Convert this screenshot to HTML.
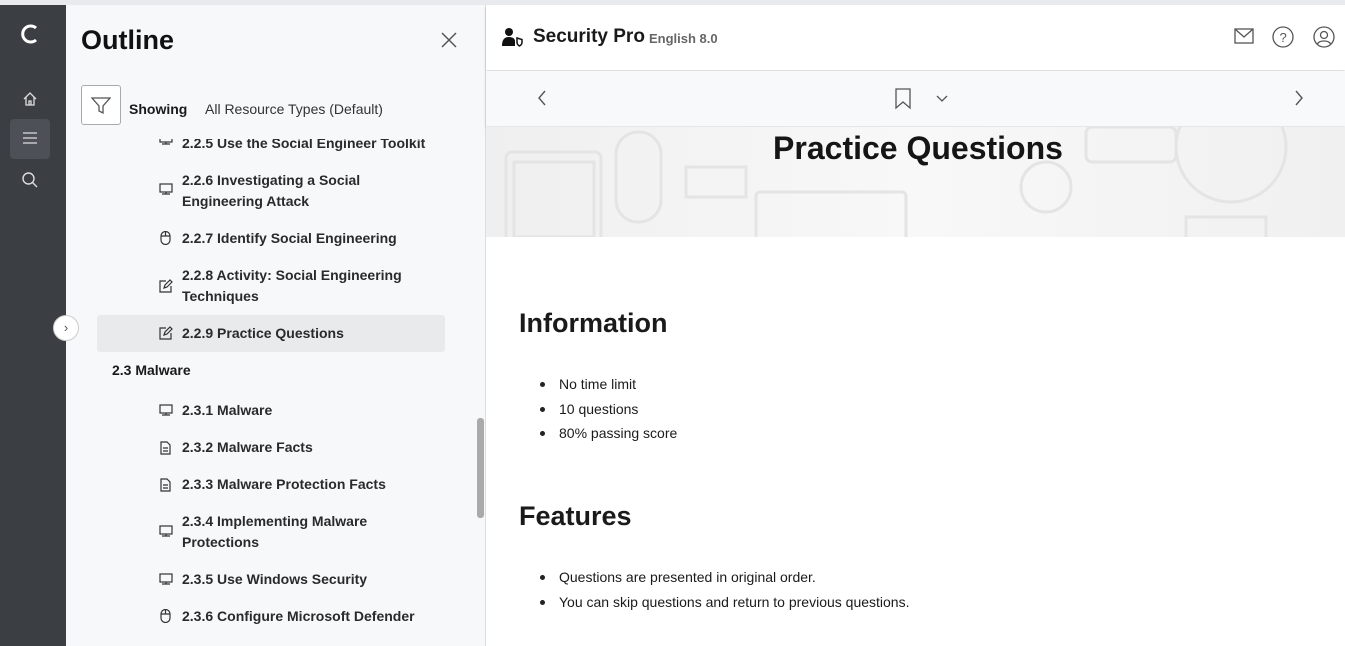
<!DOCTYPE html>
<html><head><meta charset="utf-8"><style>
*{margin:0;padding:0;box-sizing:border-box}
body{width:1345px;height:646px;overflow:hidden;font-family:"Liberation Sans",sans-serif;background:#eceef0;position:relative;color:#1a1a1a}
.top{position:absolute;left:0;top:0;width:1345px;height:5px;background:#e9eaed}
.rail{position:absolute;left:0;top:5px;width:66px;height:641px;background:#3b3e43}
.panel{position:absolute;left:66px;top:5px;width:420px;height:641px;background:#f7f8fa;border-right:1px solid #ddd;overflow:hidden}
.main{position:absolute;left:486px;top:5px;width:859px;height:641px;background:#fff}
.item{position:absolute;left:182px;font-size:14px;font-weight:bold;color:#2a2a2a;line-height:21px}
.ic{position:absolute;left:159px}
ul{position:absolute;left:559px;font-size:14px;list-style:none}
ul li{position:relative;line-height:24.5px}
ul li:before{content:"";position:absolute;left:-19px;top:10px;width:5px;height:5px;border-radius:50%;background:#222}
h2{position:absolute;left:519px;font-size:27px;font-weight:bold;color:#1a1a1a}
</style></head><body>
<div class="top"></div>
<div class="rail">
 <svg style="position:absolute;left:19px;top:18px" width="22" height="22" viewBox="0 0 22 22"><path d="M17 5 A8 8 0 1 0 17 17" fill="none" stroke="#fff" stroke-width="3"/></svg>
 <svg style="position:absolute;left:22px;top:86px" width="16" height="16" viewBox="0 0 16 16" fill="none" stroke="#ddd" stroke-width="1.3"><path d="M2 8 L8 2 L14 8 M4 6 V14 H12 V6 M7 14 V10 H9 V14"/></svg>
 <div style="position:absolute;left:10px;top:114px;width:40px;height:40px;background:#4d5157;border-radius:4px"></div>
 <svg style="position:absolute;left:23px;top:127px" width="14" height="12" stroke="#ddd" stroke-width="1.3"><path d="M0 1H14M0 6H14M0 11H14"/></svg>
 <svg style="position:absolute;left:21px;top:166px" width="18" height="18" fill="none" stroke="#ddd" stroke-width="1.4"><circle cx="7.5" cy="7.5" r="5.5"/><path d="M11.5 11.5 L16 16"/></svg>
</div>
<div class="panel">
 <div style="position:absolute;left:15px;top:20px;font-size:27px;font-weight:bold;color:#111">Outline</div>
 <svg style="position:absolute;left:375px;top:27px" width="16" height="16" stroke="#555" stroke-width="1.5"><path d="M1 1L15 15M15 1L1 15"/></svg>
 <div style="position:absolute;left:31px;top:310px;width:348px;height:37px;background:#e9eaec;border-radius:3px"></div>
 <div style="position:absolute;left:46px;top:357px;font-size:14px;font-weight:bold">2.3 Malware</div>
 <div style="position:absolute;left:411px;top:413px;width:7px;height:100px;background:#aaa;border-radius:3px"></div>
</div>
<div class="item" style="top:133px">2.2.5 Use the Social Engineer Toolkit</div>
<svg class="ic" style="top:133px" width="14" height="14"><use href="#mon"/></svg>
<div style="position:absolute;left:66px;top:126px;width:410px;height:13px;background:#f7f8fa;z-index:2"></div>
<div style="position:absolute;left:81px;top:85px;width:40px;height:40px;border:1px solid #aaa;border-radius:3px;background:#fff;z-index:3"></div>
<svg style="position:absolute;left:91px;top:96px;z-index:4" width="20" height="20" fill="none" stroke="#555" stroke-width="1.3"><path d="M1 2H19L12 10V17L8 15V10Z"/></svg>
<div style="position:absolute;left:129px;top:101px;font-size:14px;font-weight:bold;z-index:3">Showing</div>
<div style="position:absolute;left:205px;top:101px;font-size:14px;color:#333;z-index:3">All Resource Types (Default)</div>
<div style="position:absolute;left:53px;top:315px;width:26px;height:26px;border-radius:50%;background:#fff;border:1px solid #ccc;font-size:13px;text-align:center;line-height:23px;color:#555;z-index:5">›</div>
<div class="item" style="top:170px">2.2.6 Investigating a Social<br>Engineering Attack</div>
<div class="item" style="top:228px">2.2.7 Identify Social Engineering</div>
<div class="item" style="top:265px">2.2.8 Activity: Social Engineering<br>Techniques</div>
<div class="item" style="top:323px">2.2.9 Practice Questions</div>
<div class="item" style="top:400px">2.3.1 Malware</div>
<div class="item" style="top:437px">2.3.2 Malware Facts</div>
<div class="item" style="top:474px">2.3.3 Malware Protection Facts</div>
<div class="item" style="top:511px">2.3.4 Implementing Malware<br>Protections</div>
<div class="item" style="top:569px">2.3.5 Use Windows Security</div>
<div class="item" style="top:606px">2.3.6 Configure Microsoft Defender</div>
<svg width="0" height="0" style="position:absolute"><defs>
<g id="mon" fill="none" stroke="#333" stroke-width="1.2"><rect x="1" y="1" width="12" height="8"/><path d="M3 11H11M7 9V11"/></g>
<g id="mou" fill="none" stroke="#333" stroke-width="1.2"><rect x="2" y="0.5" width="9" height="13" rx="4.5"/><path d="M2 5H11M6.5 0.5V5"/></g>
<g id="ed" fill="none" stroke="#333" stroke-width="1.2"><path d="M7 2H1V13H12V7M5 9L6 6L11 1L13 3L8 8Z"/></g>
<g id="doc" fill="none" stroke="#333" stroke-width="1.2"><path d="M2 1H8L11 4V13H2Z M4 7H9M4 10H9"/></g>
</defs></svg>
<svg class="ic" style="top:183px" width="14" height="14"><use href="#mon"/></svg>
<svg class="ic" style="top:231px" width="14" height="14"><use href="#mou"/></svg>
<svg class="ic" style="top:279px" width="14" height="14"><use href="#ed"/></svg>
<svg class="ic" style="top:326px" width="14" height="14"><use href="#ed"/></svg>
<svg class="ic" style="top:404px" width="14" height="14"><use href="#mon"/></svg>
<svg class="ic" style="top:441px" width="14" height="14"><use href="#doc"/></svg>
<svg class="ic" style="top:478px" width="14" height="14"><use href="#doc"/></svg>
<svg class="ic" style="top:525px" width="14" height="14"><use href="#mon"/></svg>
<svg class="ic" style="top:573px" width="14" height="14"><use href="#mon"/></svg>
<svg class="ic" style="top:609px" width="14" height="14"><use href="#mou"/></svg>
<div class="main">
 <div style="position:absolute;left:0;top:0;width:859px;height:65px;background:#fff;box-shadow:0 2px 3px rgba(0,0,0,.15)"></div>
 <svg style="position:absolute;left:16px;top:22px" width="22" height="20" fill="#111"><circle cx="7" cy="5" r="4"/><path d="M0 19C0 12 3 10 7 10S13 12 13 14V19Z"/><path d="M15 11L20 12.5V15.5C20 17.5 17.5 19 17.5 19S15 17.5 15 15.5Z" stroke="#111" stroke-width="1.5" fill="none"/></svg>
 <div style="position:absolute;left:47px;top:21px;font-size:19px;font-weight:bold">Security Pro</div>
 <div style="position:absolute;left:163px;top:26px;font-size:13px;font-weight:bold;color:#666">English 8.0</div>
 <svg style="position:absolute;left:748px;top:23px" width="20" height="16" fill="none" stroke="#555" stroke-width="1.3"><rect x="1" y="1" width="18" height="14"/><path d="M1 1L10 9L19 1"/></svg>
 <svg style="position:absolute;left:786px;top:21px" width="22" height="22" fill="none" stroke="#555" stroke-width="1.3"><circle cx="11" cy="11" r="10"/><text x="7.5" y="16" font-size="13" fill="#555" stroke="none" font-family="Liberation Sans">?</text></svg>
 <svg style="position:absolute;left:827px;top:21px" width="22" height="22" fill="none" stroke="#555" stroke-width="1.3"><circle cx="11" cy="11" r="10"/><circle cx="11" cy="9" r="3.5"/><path d="M4.5 18C6 14 16 14 17.5 18"/></svg>
 <div style="position:absolute;left:0;top:66px;width:859px;height:55px;background:#f8f9fa;box-shadow:0 2px 3px rgba(0,0,0,.12)"></div>
 <svg style="position:absolute;left:51px;top:85px" width="10" height="16" fill="none" stroke="#555" stroke-width="1.4"><path d="M8 1L2 8L8 15"/></svg>
 <svg style="position:absolute;left:808px;top:85px" width="10" height="16" fill="none" stroke="#555" stroke-width="1.4"><path d="M2 1L8 8L2 15"/></svg>
 <svg style="position:absolute;left:408px;top:83px" width="18" height="22" fill="none" stroke="#555" stroke-width="1.3"><path d="M2 1H16V20L9 14L2 20Z"/></svg>
 <svg style="position:absolute;left:450px;top:90px" width="12" height="8" fill="none" stroke="#555" stroke-width="1.3"><path d="M1 1L6 6L11 1"/></svg>
 <div style="position:absolute;left:0;top:122px;width:859px;height:110px;background:linear-gradient(90deg,#efefef,#f8f8f8 50%,#f0f0f0);overflow:hidden">
  <svg width="859" height="110" fill="none" stroke="#e4e4e4" stroke-width="3"><rect x="20" y="25" width="95" height="90" rx="6"/><rect x="28" y="35" width="80" height="75"/><rect x="130" y="5" width="45" height="90" rx="22"/><rect x="200" y="40" width="60" height="30"/><rect x="270" y="65" width="150" height="60" rx="4"/><circle cx="560" cy="60" r="25"/><circle cx="745" cy="20" r="55"/><rect x="600" y="0" width="90" height="35" rx="6"/><rect x="700" y="90" width="80" height="30"/></svg>
 </div>
 <div style="position:absolute;left:0;top:125px;width:859px;text-align:center;font-size:32px;font-weight:bold;color:#151515;padding-left:5px">Practice Questions</div>
</div>
<h2 style="top:308px">Information</h2>
<ul style="top:372px"><li>No time limit</li><li>10 questions</li><li>80% passing score</li></ul>
<h2 style="top:501px">Features</h2>
<ul style="top:565px"><li>Questions are presented in original order.</li><li>You can skip questions and return to previous questions.</li></ul>
</body></html>
